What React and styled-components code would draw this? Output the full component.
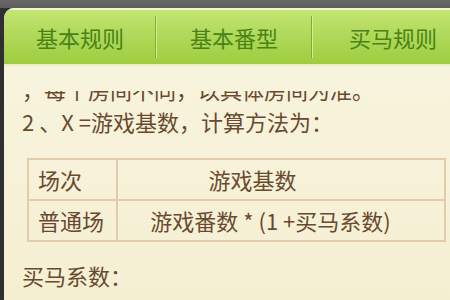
import React from 'react';
import styled, {createGlobalStyle} from 'styled-components';

const GlobalStyle = createGlobalStyle`
    html, body {
        margin: 0;
        padding: 0;
        width: 450px;
        height: 300px;
        overflow: hidden;
        background: #3c3c3c;
    }
`;

const Screen = styled.div`
    width: 450px;
    height: 300px;
    box-sizing: border-box;
    padding: 8px 0 0 4px;
    background: linear-gradient(to bottom, #6a6868 0px, #5f5d5d 8px, #2f2f2f 8px);
    font-family: "Noto Sans CJK SC", "Noto Sans", sans-serif;
`;

const Panel = styled.div`
    height: 100%;
    border-top-left-radius: 10px;
    overflow: hidden;
    background: linear-gradient(to bottom, #f8f5e0 0%, #f5efd2 100%);
    display: flex;
    flex-direction: column;
`;

const Tabs = styled.nav`
    height: 58px;
    flex-shrink: 0;
    display: flex;
    align-items: stretch;
    border-top: 2px solid #eef7c9;
    box-sizing: border-box;
    background: linear-gradient(to bottom, #c4e572 0%, #b0d95a 45%, #9fcd40 100%);
    border-bottom: 2px solid #e9f0c2;
`;

const Tab = styled.div`
    width: ${p => p.w}px;
    flex-shrink: 0;
    display: flex;
    align-items: center;
    justify-content: center;
    font-size: 22px;
    color: #4a8217;
    position: relative;
    padding-left: ${p => p.shift || 0}px;
    box-sizing: border-box;
    ${p => p.divider && `
        &::after {
            content: '';
            position: absolute;
            right: 0;
            top: 6px;
            bottom: 6px;
            width: 1px;
            background: #7fae2c;
            box-shadow: 1px 0 0 #d5ee98;
        }
    `}
`;

const Body = styled.div`
    flex: 1;
    margin-top: 25px;
    overflow: hidden;
    padding: 0 0 0 18px;
    color: #694a2e;
`;

const Line = styled.p`
    margin: 0;
    font-size: 22px;
    line-height: 32px;
    white-space: nowrap;
    margin-top: ${p => p.top || 0}px;
`;

const Table = styled.table`
    border-collapse: collapse;
    margin: 21px 0 17px 5px;
    width: 419px;
    font-size: 22px;
    color: #694a2e;
`;

const Cell = styled.td`
    border: 2px solid #e3ccab;
    height: 37px;
    padding: 0 ${p => p.right || 0}px 2px 9px;
    text-align: ${p => p.center ? 'center' : 'left'};
    width: ${p => p.w ? p.w + 'px' : 'auto'};
    white-space: nowrap;
`;

export default function App() {
    return (
        <Screen>
            <GlobalStyle />
            <Panel>
                <Tabs>
                    <Tab w={152} divider>基本规则</Tab>
                    <Tab w={156} divider>基本番型</Tab>
                    <Tab w={160} shift={2}>买马规则</Tab>
                </Tabs>
                <Body>
                    <Line top={-18}>，每个房间不同，以具体房间为准。</Line>
                    <Line>2 、X =游戏基数，计算方法为：</Line>
                    <Table>
                        <tbody>
                            <tr>
                                <Cell w={78}>场次</Cell>
                                <Cell center right={66}>游戏基数</Cell>
                            </tr>
                            <tr>
                                <Cell>普通场</Cell>
                                <Cell center right={30}>游戏番数 * (1 +买马系数)</Cell>
                            </tr>
                        </tbody>
                    </Table>
                    <Line>买马系数：</Line>
                </Body>
            </Panel>
        </Screen>
    );
}
